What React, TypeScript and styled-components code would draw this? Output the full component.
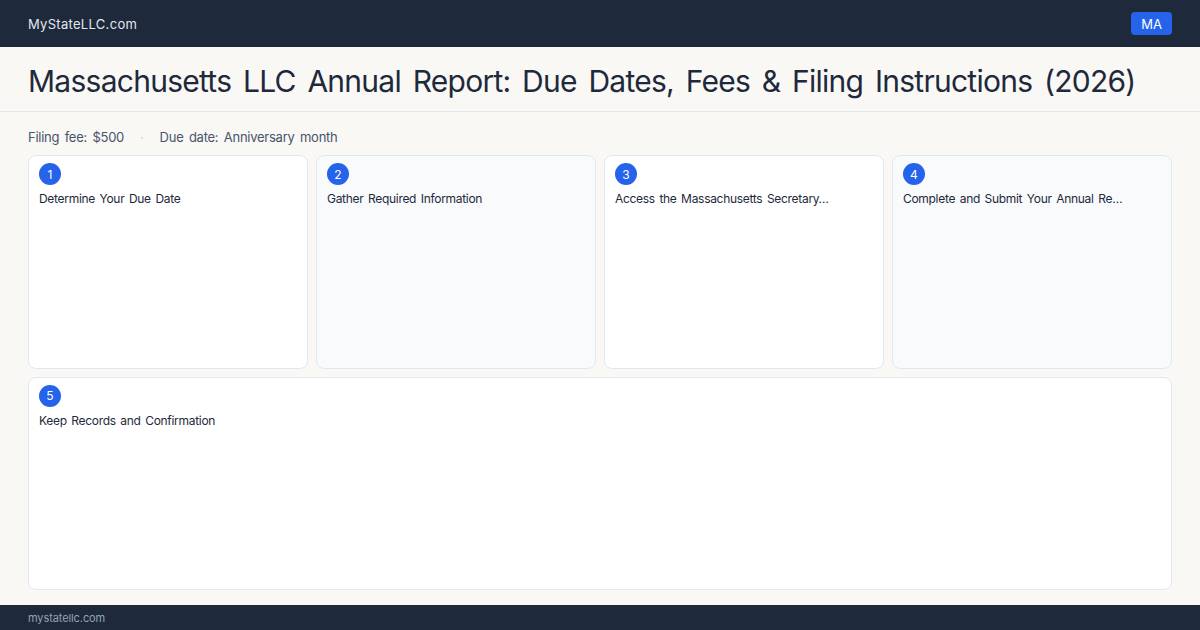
import React from 'react';
import styled, { createGlobalStyle } from 'styled-components';

const steps = [
  'Determine Your Due Date',
  'Gather Required Information',
  'Access the Massachusetts Secretary of the Commonwealth Online Portal',
  'Complete and Submit Your Annual Report',
  'Keep Records and Confirmation',
];

// card titles are cut at a fixed number of characters
const clip = (s: string, n = 34) => (s.length > n ? s.slice(0, n).trimEnd() + '…' : s);

const GlobalStyle = createGlobalStyle`
  html, body { margin: 0; padding: 0; }
  body {
    font-family: Inter, "Noto Sans", sans-serif;
    background: #f9f8f5;
    color: #1e293b;
  }
`;

const Page = styled.div`
  height: 630px;
  display: flex;
  flex-direction: column;
  background: #f9f8f5;
`;

const TopBar = styled.header`
  height: 47px;
  flex-shrink: 0;
  background: #1e293b;
  display: flex;
  align-items: center;
  justify-content: space-between;
  padding: 0 28px;
`;

const Logo = styled.div`
  color: #e2e8f0;
  font-size: 13px;
  letter-spacing: 0.3px;
`;

const Badge = styled.div`
  background: #2563eb;
  color: #fff;
  font-size: 13px;
  border-radius: 4px;
  height: 23px;
  padding: 0 10px;
  display: flex;
  align-items: center;
`;

const TitleBand = styled.div`
  padding: 16px 28px 12px;
  border-bottom: 1px solid #e2e8f0;
`;

const Title = styled.h1`
  margin: 0;
  font-size: 30px;
  line-height: 36px;
  font-weight: 400;
  color: #1e293b;
  letter-spacing: -0.74px;
  word-spacing: 4px;
  white-space: nowrap;
`;

const Main = styled.main`
  flex: 1;
  display: flex;
  flex-direction: column;
  padding: 16px 28px 15px;
  min-height: 0;
`;

const Meta = styled.div`
  display: flex;
  align-items: center;
  gap: 16px;
  font-size: 13px;
  line-height: 18px;
  color: #475569;
  letter-spacing: -0.25px;
  word-spacing: 2px;
  margin-bottom: 9px;
`;

const Sep = styled.span`
  color: #cbd5e1;
`;

const Grid = styled.div`
  flex: 1;
  display: grid;
  grid-template-columns: repeat(4, 1fr);
  grid-template-rows: 1fr 1fr;
  gap: 8px;
  min-height: 0;
`;

const Card = styled.div<{ $alt: boolean; $wide: boolean }>`
  background: ${(p) => (p.$alt ? '#f8fafc' : '#ffffff')};
  border: 1px solid #e2e8f0;
  border-radius: 8px;
  padding: 7px 10px;
  min-width: 0;
  grid-column: ${(p) => (p.$wide ? '1 / -1' : 'auto')};
`;

const Num = styled.div`
  width: 22px;
  height: 22px;
  border-radius: 50%;
  background: #2563eb;
  color: #fff;
  font-size: 12px;
  display: flex;
  align-items: center;
  justify-content: center;
`;

const StepTitle = styled.div`
  margin-top: 6px;
  font-size: 12px;
  line-height: 16px;
  color: #1e293b;
  letter-spacing: -0.3px;
  word-spacing: 1.5px;
  white-space: nowrap;
  overflow: hidden;
  text-overflow: ellipsis;
`;

const Footer = styled.footer`
  height: 25px;
  flex-shrink: 0;
  background: #1e293b;
  display: flex;
  align-items: center;
  padding: 0 28px;
  color: #94a3b8;
  font-size: 11px;
  letter-spacing: -0.1px;
`;

export default function App() {
  return (
    <>
      <GlobalStyle />
      <Page>
        <TopBar>
          <Logo>MyStateLLC.com</Logo>
          <Badge>MA</Badge>
        </TopBar>
        <TitleBand>
          <Title>Massachusetts LLC Annual Report: Due Dates, Fees &amp; Filing Instructions (2026)</Title>
        </TitleBand>
        <Main>
          <Meta>
            <span>Filing fee: $500</span>
            <Sep>·</Sep>
            <span>Due date: Anniversary month</span>
          </Meta>
          <Grid>
            {steps.map((s, i) => (
              <Card key={i} $alt={i % 2 === 1 && i < 4} $wide={i === 4}>
                <Num>{i + 1}</Num>
                <StepTitle>{clip(s)}</StepTitle>
              </Card>
            ))}
          </Grid>
        </Main>
        <Footer>mystatellc.com</Footer>
      </Page>
    </>
  );
}
